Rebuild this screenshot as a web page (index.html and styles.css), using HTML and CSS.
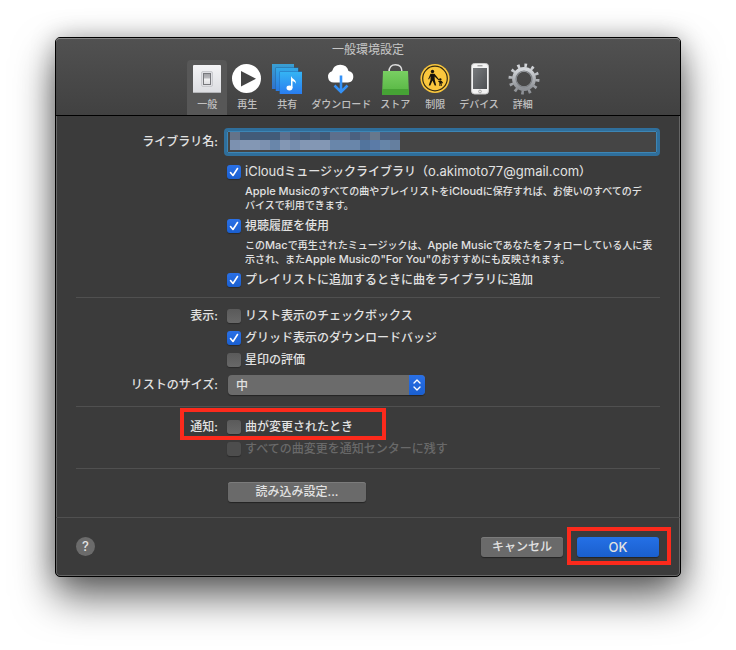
FILE: index.html
```
<!DOCTYPE html>
<html lang="ja">
<head>
  <meta charset="UTF-8">
  <title>一般環境設定</title>
  <link rel="stylesheet" href="styles.css">
</head>
<body>

  <main class="window">
    <header class="titlebar">
      <h1>一般環境設定</h1>
      <nav class="toolbar">
        <button type="button" class="tab active">
          <svg width="32" height="32" viewBox="0 0 32 32">
            <defs>
              <linearGradient id="plate" x1="0" y1="0" x2="0" y2="1"><stop offset="0" stop-color="#f4f4f6"/><stop offset="1" stop-color="#dcdde1"/></linearGradient>
              <linearGradient id="rocker" x1="0" y1="0" x2="0" y2="1"><stop offset="0" stop-color="#a0a0a4"/><stop offset=".45" stop-color="#bcbcc0"/><stop offset=".46" stop-color="#f4f4f4"/><stop offset="1" stop-color="#dcdce0"/></linearGradient>
            </defs>
            <rect x="2" y="3" width="28" height="28" rx="1" fill="url(#plate)"/>
            <path d="M2 30.500h28" stroke="#b4b5b8"/>
            <rect x="10.500" y="9.500" width="11" height="15" rx="1.500" fill="#dfdfe3" stroke="#c9cace"/>
            <rect x="12.500" y="11.500" width="7" height="11" fill="url(#rocker)" stroke="#77787c"/>
          </svg>
          <span>一般</span>
        </button>
        <button type="button" class="tab">
          <svg width="32" height="32" viewBox="0 0 32 32">
            <circle cx="15.500" cy="16.500" r="14.500" fill="#fff"/>
            <path d="M10 9v15.500l15-7.750z" fill="#454545"/>
          </svg>
          <span>再生</span>
        </button>
        <button type="button" class="tab">
          <svg width="32" height="32" viewBox="0 0 32 32">
            <defs>
              <linearGradient id="share" x1="0" y1="0" x2="0" y2="1"><stop offset="0" stop-color="#35b4f4"/><stop offset="1" stop-color="#2a7df0"/></linearGradient>
            </defs>
            <path d="M1 2h22v25H1z" fill="url(#share)" opacity=".8"/>
            <path d="M4.500 5.500h23V29h-23z" fill="#23669f"/>
            <path d="M5 6h22v23H5z" fill="url(#share)" opacity=".85"/>
            <path d="M8.500 9.500H31V32H8.500z" fill="#2471b8"/>
            <path d="M9 10h22v22H9z" fill="url(#share)"/>
            <path d="M20 26V14c1 3 5.500 3.500 5 8-.5-2-2-2.500-3.500-3v7z" fill="#fff"/>
            <ellipse cx="18.500" cy="26" rx="3" ry="2.400" fill="#fff"/>
          </svg>
          <span>共有</span>
        </button>
        <button type="button" class="tab">
          <svg width="32" height="32" viewBox="0 0 32 32">
            <path d="M9 20.500a5.800 5.800 0 0 1-2-11.300A8.500 8.500 0 0 1 23.500 9a5.800 5.800 0 0 1-.5 11.500z" fill="#fff"/>
            <path d="M16 13.500V29M9.500 23.500L16 30l6.500-6.500" fill="none" stroke="#3391f7" stroke-width="2.600"/>
          </svg>
          <span>ダウンロード</span>
        </button>
        <button type="button" class="tab">
          <svg width="32" height="32" viewBox="0 0 32 32">
            <defs>
              <linearGradient id="bag" x1="0" y1="0" x2="0" y2="1"><stop offset="0" stop-color="#79cf62"/><stop offset="1" stop-color="#54b441"/></linearGradient>
            </defs>
            <path d="M10 10C10 5 12.500 2.800 16.500 2.800S23 5 23 10" fill="none" stroke="#ddd" stroke-width="1.500"/>
            <path d="M4 9h25l1 24H3z" fill="url(#bag)"/>
            <path d="M3.300 27h26.400l.3 6H3z" fill="#46a335"/>
          </svg>
          <span>ストア</span>
        </button>
        <button type="button" class="tab">
          <svg width="32" height="32" viewBox="0 0 32 32">
            <circle cx="16" cy="16.500" r="14.500" fill="#fac73d"/>
            <circle cx="16" cy="16.500" r="12.300" fill="none" stroke="#332b13" stroke-width="1.200"/>
            <g fill="#17140b">
              <circle cx="13.500" cy="9.500" r="1.700"/>
              <path d="M11.500 11.700h4l5 6.300-.7.600-4.200-4.200.2 3.600 1.400 5.500h-1.500l-2.200-5-2.200 5H9.700l1.800-5.500v-3.800l-1.500 3.300-.8-.4z"/>
              <circle cx="21.300" cy="17.500" r="1.200"/>
              <path d="M19.600 19h3.200l1.400 2-.5.400-1-1V24h-.9v-2.300h-.5V24h-.9v-3.400l-1.500-1.400z"/>
            </g>
          </svg>
          <span>制限</span>
        </button>
        <button type="button" class="tab">
          <svg width="32" height="32" viewBox="0 0 32 32">
            <defs>
              <linearGradient id="screen" x1="0" y1="0" x2="1" y2="1"><stop offset="0" stop-color="#777a7d"/><stop offset="1" stop-color="#4d4f52"/></linearGradient>
            </defs>
            <rect x="8.500" y="1.500" width="17" height="30.500" rx="3" fill="#f3f3f3" stroke="#c7c7c7"/>
            <rect x="10" y="6" width="14" height="21" fill="url(#screen)"/>
            <path d="M14.500 3.800h5" stroke="#888"/>
            <circle cx="17" cy="29.500" r="1.400" fill="#eee" stroke="#999" stroke-width=".8"/>
          </svg>
          <span>デバイス</span>
        </button>
        <button type="button" class="tab">
          <svg width="32" height="32" viewBox="0 0 32 32">
            <defs>
              <linearGradient id="gear" x1="0" y1="0" x2="0" y2="1"><stop offset="0" stop-color="#d3d6da"/><stop offset="1" stop-color="#8d9095"/></linearGradient>
            </defs>
            <circle cx="17" cy="17" r="13.500" fill="none" stroke="url(#gear)" stroke-width="4" stroke-dasharray="2.600 4.468"/>
            <circle cx="17" cy="17" r="9.600" fill="none" stroke="url(#gear)" stroke-width="4.600"/>
            <circle cx="17" cy="17" r="8" fill="none" stroke="#7d8085" stroke-width="1.200"/>
          </svg>
          <span>詳細</span>
        </button>
      </nav>
    </header>

    <form class="prefs">
      <section class="group">
        <label class="name" for="library">ライブラリ名:</label>
        <div class="field">
          <input type="text" id="library" class="library">
          <!-- hidden library name -->
          <svg class="mosaic" width="170" height="18" viewBox="0 0 170 18" shape-rendering="crispEdges">
            <path d="M0 0h170v8H0z" fill="#425b78"/>
            <path d="M0 0h10v8H0z" fill="#647389"/>
            <path d="M50 0h10v8H50zM100 0h20v8h-20z" fill="#5d6f8c"/>
            <path d="M60 0h10v8H60zM80 0h10v8H80zM120 0h10v8h-10zM150 0h10v8h-10z" fill="#4b607f"/>
            <path d="M130 0h10v8h-10z" fill="#556987"/>
            <path d="M140 0h10v8h-10z" fill="#67788c"/>
            <path d="M160 0h10v8h-10z" fill="#4e607e"/>
            <path d="M0 8h170v10H0z" fill="#8397b4"/>
            <path d="M0 8h10v10H0zM30 8h10v10H30z" fill="#7c91b0"/>
            <path d="M40 8h10v10H40zM100 8h40v10h-40z" fill="#6986aa"/>
            <path d="M60 8h10v10H60z" fill="#768eaf"/>
            <path d="M130 8h10v10h-10z" fill="#52749d"/>
            <path d="M140 8h10v10h-10z" fill="#5b7ba7"/>
            <path d="M150 8h10v10h-10z" fill="#6685a8"/>
            <path d="M160 8h10v10h-10z" fill="#657f9f"/>
          </svg>
        </div>
        <div class="options">
          <label class="check"><input type="checkbox" checked><span><span class="latin">iCloud</span>ミュージックライブラリ（<span class="latin">o.akimoto77@gmail.com</span>）</span></label>
          <p class="hint"><span class="latin">Apple Music</span>のすべての曲やプレイリストを<span class="latin">iCloud</span>に保存すれば、お使いのすべてのデ<br>バイスで利用できます。</p>
          <label class="check"><input type="checkbox" checked>視聴履歴を使用</label>
          <p class="hint">この<span class="latin">Mac</span>で再生されたミュージックは、<span class="latin">Apple Music</span>であなたをフォローしている人に表<br>示され、また<span class="latin">Apple Music</span>の<span class="latin">"For You"</span>のおすすめにも反映されます。</p>
          <label class="check"><input type="checkbox" checked>プレイリストに追加するときに曲をライブラリに追加</label>
        </div>
      </section>

      <section class="group">
        <span class="name">表示:</span>
        <div class="options">
          <label class="check"><input type="checkbox">リスト表示のチェックボックス</label>
          <label class="check"><input type="checkbox" checked>グリッド表示のダウンロードバッジ</label>
          <label class="check"><input type="checkbox">星印の評価</label>
        </div>
        <label class="name size" for="size">リストのサイズ:</label>
        <div class="popup">
          <select id="size">
            <option>小</option>
            <option selected>中</option>
            <option>大</option>
          </select>
          <svg class="arrows" width="16" height="20" viewBox="0 0 16 20">
            <path d="M5 8l3-3 3 3M5 12l3 3 3-3" fill="none" stroke="#fff" stroke-width="1.400" stroke-linecap="round" stroke-linejoin="round"/>
          </svg>
        </div>
      </section>

      <section class="group notify">
        <span class="name">通知:</span>
        <div class="options">
          <label class="check"><input type="checkbox">曲が変更されたとき</label>
          <label class="check disabled"><input type="checkbox" disabled>すべての曲変更を通知センターに残す</label>
        </div>
      </section>

      <section class="group import">
        <button type="button" class="btn wide">読み込み設定...</button>
      </section>
    </form>

    <footer class="footer">
      <button type="button" class="help">?</button>
      <button type="button" class="btn">キャンセル</button>
      <div class="confirm">
        <button type="button" class="btn primary">OK</button>
      </div>
    </footer>
  </main>

</body>
</html>
```
FILE: styles.css
```
*, *::after {
  box-sizing: border-box;
}
body {
  margin: 0;
  padding: 37px 55px 73px;
  background: #fff;
  color: #e2e2e2;
  font-family: Inter, "Noto Sans CJK JP", sans-serif;
  font-size: 12px;
  font-weight: 500;
  line-height: 22px;
}
button, input, select {
  font: inherit;
  color: inherit;
}

/* window */
.window {
  background: #3b3b3b;
  border: 1px solid #000;
  border-radius: 5px;
  box-shadow: inset 0 0 0 1px #666, 0 20px 40px rgba(0, 0, 0, 0.6), 0 0 24px rgba(0, 0, 0, 0.25);
}
.titlebar {
  background: linear-gradient(#515151, #414141);
  border-bottom: 1px solid #000;
  border-radius: 4px 4px 0 0;
  box-shadow: inset 0 1px 0 #858585;
}
h1 {
  margin: 0;
  padding-top: 1px;
  font-size: 12px;
  font-weight: normal;
  line-height: 21px;
  text-align: center;
  color: #c6c6c6;
}
.toolbar {
  display: flex;
  justify-content: center;
  padding-right: 6px;
}
.tab {
  display: flex;
  flex-direction: column;
  align-items: center;
  min-width: 40px;
  height: 55px;
  padding: 2px 4px 0;
  border: 0;
  border-radius: 4px 4px 0 0;
  background: none;
  color: #c0c0c0;
  font-size: 10px;
  line-height: 20px;
}
.tab svg {
  display: block;
  overflow: visible;
}
.tab.active {
  background: #575757;
}

/* settings */
.prefs {
  padding: 0 20px;
}
.group {
  display: grid;
  grid-template-columns: 142px 1fr;
  column-gap: 9px;
  padding: 7px 0 10px;
  border-bottom: 1px solid #505050;
}
.group:first-child {
  padding: 15px 0 6px;
}
.name {
  text-align: right;
}
.options {
  grid-column: 2;
}
.latin {
  font-size: 13px;
  font-weight: 400;
}
.field {
  position: relative;
  margin: 0 3px 7px 0;
}
.library {
  display: block;
  width: 100%;
  height: 22px;
  padding: 0 3px;
  border: 1px solid #3d86b5;
  border-radius: 1px;
  outline: 3px solid #2f6f9c;
  background: #454545;
}
.mosaic {
  position: absolute;
  left: 3px;
  top: 1px;
}
.check {
  display: flex;
  align-items: center;
  gap: 4px;
}
.check input {
  appearance: none;
  width: 14px;
  height: 14px;
  margin: 0;
  border-radius: 3px;
  background: linear-gradient(#5a5a5a, #686868);
  box-shadow: 0 1px 1px rgba(0, 0, 0, 0.3);
}
.check input:checked {
  background: url('data:image/svg+xml,<svg xmlns="http://www.w3.org/2000/svg" viewBox="0 0 14 14"><path d="M3.500 7.500l2.500 3 4.500-7" fill="none" stroke="white" stroke-width="1.600" stroke-linecap="round" stroke-linejoin="round"/></svg>'), linear-gradient(#2a70e6, #1a5fd0);
}
.check.disabled {
  color: #696969;
}
.check.disabled input {
  background: #4d4d4d;
}
.hint {
  margin: 1px 0 3px 18px;
  font-size: 10px;
  line-height: 14px;
}
.hint .latin {
  font-size: 11px;
  font-weight: 500;
}
.popup {
  position: relative;
  width: 197px;
  margin: 4px 0 0 1px;
}
.name.size {
  margin-top: 3px;
}
select {
  appearance: none;
  display: block;
  width: 100%;
  height: 20px;
  padding: 0 8px;
  border: 0;
  border-radius: 4px;
  background: #6b6b6b;
  box-shadow: 0 1px 1px rgba(0, 0, 0, 0.4);
}
.arrows {
  position: absolute;
  right: 0;
  top: 0;
  border-radius: 0 4px 4px 0;
  background: linear-gradient(#2a70e6, #1a5fd0);
  pointer-events: none;
}
.notify {
  position: relative;
  padding: 9px 0 8px;
}
.notify::after {
  content: "";
  position: absolute;
  left: 104px;
  top: 1px;
  width: 206px;
  height: 32px;
  border: 4px solid #fc2a1c;
}

/* buttons */
.btn {
  width: 82px;
  height: 20px;
  padding: 0;
  border: 0;
  border-radius: 3px;
  background: #6a6a6a;
  box-shadow: 0 1px 1px rgba(0, 0, 0, 0.4), inset 0 1px 0 #7b7b7b;
  line-height: 20px;
}
.btn.wide {
  grid-column: 2;
  width: 138px;
  margin-left: 1px;
}
.btn.primary {
  display: block;
  background: linear-gradient(#2470e6, #1a5fcd);
  box-shadow: 0 1px 1px rgba(0, 0, 0, 0.4);
  font-size: 13px;
}
.import {
  padding: 13px 0 15px;
  border: 0;
}
.footer {
  display: flex;
  align-items: flex-start;
  gap: 14px;
  padding: 19px 21px 19px 20px;
  border-top: 1px solid #505050;
}
.help {
  width: 19px;
  height: 19px;
  margin-right: auto;
  padding: 0;
  border: 0;
  border-radius: 50%;
  background: #6b6b6b;
  font-size: 13px;
  line-height: 19px;
}
.confirm {
  position: relative;
}
.confirm::after {
  content: "";
  position: absolute;
  inset: -10px -12px -8px -10px;
  border: 4px solid #fc2a1c;
}
```
